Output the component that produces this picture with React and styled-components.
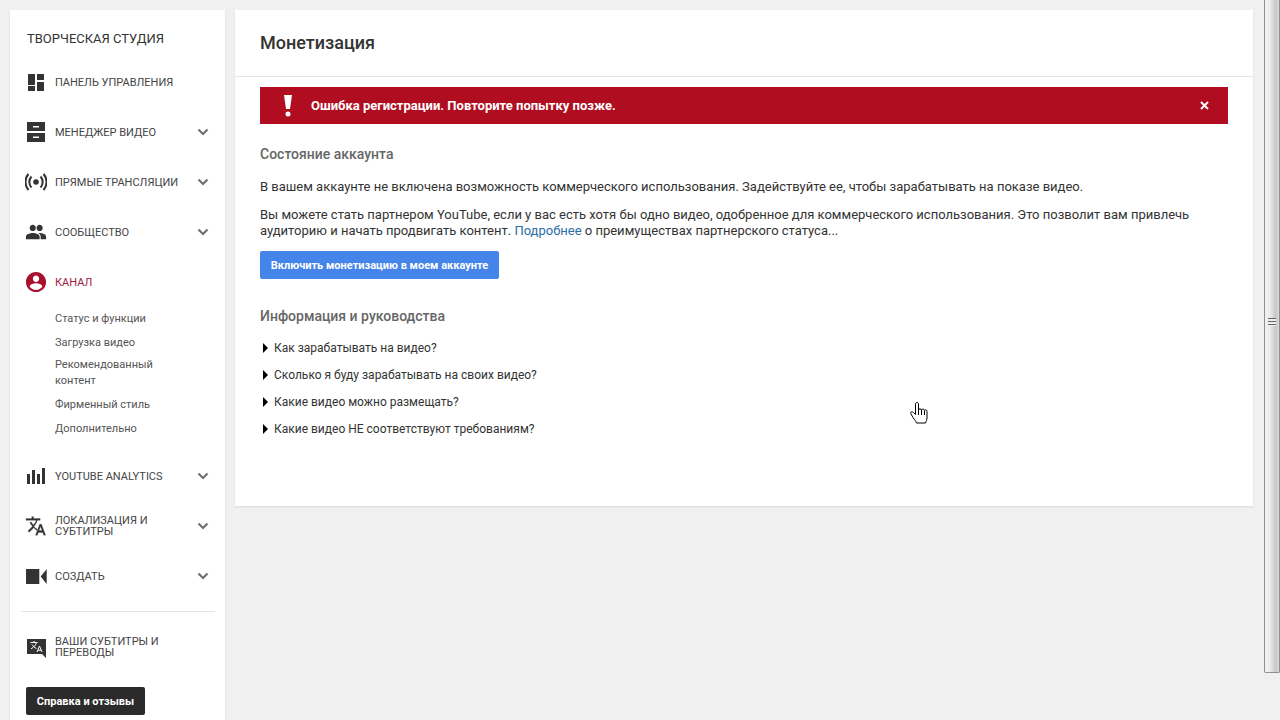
import React from 'react'
import styled, { createGlobalStyle } from 'styled-components'

const GlobalStyle = createGlobalStyle`
  html, body {
    margin: 0;
    padding: 0;
    height: 100%;
    overflow: hidden;
    background: #f0f0f0;
    font-family: Roboto, "Liberation Sans", sans-serif;
  }
`

const Page = styled.div`
  position: relative;
  display: flex;
  width: 1280px;
  height: 720px;
  overflow: hidden;
`
const Workspace = styled.div`
  flex: 1;
  display: flex;
  gap: 10px;
  align-items: flex-start;
  padding: 10px 11px 0 10px;
`
const Sidebar = styled.aside`
  width: 215px;
  height: 710px;
  flex-shrink: 0;
  background: #fff;
  box-shadow: 0 1px 2px rgba(0, 0, 0, 0.1);
  box-sizing: border-box;
  padding-top: 22px;
`
const Brand = styled.div`
  font-size: 13px;
  line-height: 14px;
  font-weight: 400;
  color: #333;
  padding-left: 17px;
  margin-bottom: 11px;
`
const NavRow = styled.div`
  height: 50px;
  display: flex;
  align-items: center;
  padding-left: 15px;
  padding-right: 15px;
  box-sizing: border-box;
`
const NavIcon = styled.svg`
  width: 22px;
  height: 22px;
  flex-shrink: 0;
  margin-right: 8px;
  fill: ${props => props.$color || '#333'};
`
const NavLabel = styled.span`
  flex: 1;
  font-size: 11px;
  line-height: 11px;
  color: ${props => props.$active ? '#9c1b3c' : '#444'};
  max-width: ${props => props.$wide ? '118px' : 'none'};
`
const Chevron = styled.svg`
  width: 14px;
  height: 14px;
  fill: none;
  stroke: #707070;
  stroke-width: 2.2;
  margin-left: auto;
`
const SubList = styled.div`
  display: flex;
  flex-direction: column;
  padding: 0 0 10px 45px;
`
const SubItem = styled.div`
  font-size: 11px;
  line-height: 16px;
  color: #555;
  width: 118px;
  padding: 4px 0;
  margin-top: ${props => props.$tight ? '-2px' : '0'};
`
const Divider = styled.div`
  height: 1px;
  background: #e4e4e4;
  margin: 10px 10px 10px 11px;
`
const HelpButton = styled.button`
  display: block;
  width: 119px;
  height: 28px;
  margin: 15px 0 0 16px;
  padding: 0;
  border: 0;
  border-radius: 2px;
  background: #2b2b2b;
  color: #fff;
  font-family: inherit;
  font-size: 11px;
  font-weight: 700;
`
const Main = styled.main`
  width: 1018px;
  height: 496px;
  background: #fff;
  box-shadow: 0 1px 2px rgba(0, 0, 0, 0.1);
`
const Header = styled.header`
  height: 67px;
  box-sizing: border-box;
  border-bottom: 1px solid #e4e4e4;
  padding-top: 22px;
  padding-left: 25px;
`
const Title = styled.h1`
  margin: 0;
  font-size: 18px;
  line-height: 21px;
  font-weight: 500;
  color: #333;
`
const Content = styled.div`
  padding: 10px 25px 0;
`
const Alert = styled.div`
  height: 37px;
  display: flex;
  align-items: center;
  background: #b00d20;
  color: #fff;
`
const AlertMark = styled.svg`
  width: 10px;
  height: 22px;
  margin-left: 23px;
  margin-right: 18px;
  fill: #fff;
`
const AlertText = styled.span`
  flex: 1;
  font-size: 13px;
  font-weight: 700;
`
const CloseIcon = styled.svg`
  width: 9px;
  height: 9px;
  margin-right: 19px;
  stroke: #fff;
  stroke-width: 2;
`
const SectionTitle = styled.h2`
  margin: ${props => props.$top} 0 0;
  font-size: 14px;
  line-height: 18px;
  font-weight: 500;
  color: #666;
`
const Paragraph = styled.p`
  margin: ${props => props.$top} 0 0;
  font-size: 13px;
  line-height: 16px;
  color: #333;
`
const InlineLink = styled.a`
  color: #2a6da8;
`
const PrimaryButton = styled.button`
  display: block;
  width: 239px;
  height: 28px;
  margin-top: 12px;
  padding: 0;
  border: 0;
  border-radius: 2px;
  background: #4584e8;
  color: #fff;
  font-family: inherit;
  font-size: 11px;
  font-weight: 700;
`
const Faq = styled.div`
  margin-top: 9px;
`
const FaqRow = styled.div`
  height: 27px;
  display: flex;
  align-items: center;
  font-size: 12px;
  color: #333;
`
const FaqArrow = styled.span`
  width: 0;
  height: 0;
  margin: 0 6px 0 3px;
  border-top: 5px solid transparent;
  border-bottom: 5px solid transparent;
  border-left: 5px solid #000;
`
const Scrollbar = styled.div`
  width: 16px;
  height: 720px;
  flex-shrink: 0;
  box-sizing: border-box;
  background: #f0f0f0;
`
const Thumb = styled.div`
  height: 673px;
  box-sizing: border-box;
  border: 1px solid #8f8f8f;
  border-top: 0;
  border-radius: 0 0 2px 2px;
  background: linear-gradient(to right, #f2f2f2 0%, #ececec 35%, #c8c8c8 75%, #d8d8d8 100%);
  display: flex;
  align-items: center;
  justify-content: center;
  padding-bottom: 29px;
`
const Grip = styled.div`
  width: 8px;
  height: 8px;
  background: repeating-linear-gradient(to bottom, #666 0, #666 1px, #eee 1px, #eee 3px);
`
const Cursor = styled.svg`
  position: absolute;
  left: 910px;
  top: 401px;
  width: 18px;
  height: 24px;
`

const nav = [
  { label: 'ПАНЕЛЬ УПРАВЛЕНИЯ', box: '0 0 22 22', d: 'M3 3h7v11H3zM12 3h7v6h-7zM3 15h7v5H3zM12 11h7v9h-7z' },
  { label: 'МЕНЕДЖЕР ВИДЕО', more: true, box: '0 0 22 22', d: 'M2 1h18v9H2zM2 12h18v9H2zM8 5v1.500h6V5zM8 15.500V17h6v-1.500z', rule: 'evenodd' },
  { label: 'ПРЯМЫЕ ТРАНСЛЯЦИИ', more: true, live: true },
  { label: 'СООБЩЕСТВО', more: true, box: '-1 -1 24 24', d: 'M15 10c1.900 0 3.300-1.500 3.300-3.400S16.900 3.200 15 3.200s-3.400 1.500-3.400 3.400S13.100 10 15 10zM7.500 10c1.900 0 3.300-1.500 3.300-3.400S9.400 3.200 7.500 3.200 4.100 4.700 4.100 6.600 5.600 10 7.500 10zm0 2.200C5 12.200 0 13.500 0 16v2.800h15V16c0-2.500-5-3.800-7.500-3.800zm7.500 0c-.3 0-.7 0-1.100.1 1.300.9 2.200 2.100 2.200 3.700v2.800H22V16c0-2.500-4.500-3.800-7-3.800z' },
]
const subItems = [
  { label: 'Статус и функции' },
  { label: 'Загрузка видео' },
  { label: 'Рекомендованный контент', tight: true },
  { label: 'Фирменный стиль' },
  { label: 'Дополнительно' },
]
const faq = ['Как зарабатывать на видео?', 'Сколько я буду зарабатывать на своих видео?', 'Какие видео можно размещать?', 'Какие видео НЕ соответствуют требованиям?']
const translate = 'M12.300 14.500l-2.800-2.800.03-.03C11.500 9.500 12.900 7 13.700 4.400H17V2.200H9.100V0H6.900v2.200H0v2.200h12.300c-.7 2.100-1.900 4.100-3.300 5.700-1-1.100-1.700-2.200-2.300-3.500H4.500c.8 1.800 1.900 3.500 3.300 5l-5.600 5.600 1.600 1.600 5.500-5.500 3.400 3.400.6-2.200zM18.600 9h-2.200l-5 13.200h2.200l1.200-3.300h5.200l1.300 3.300h2.200L18.600 9zm-3 7.700l1.800-4.800 1.800 4.800h-3.600z'

const More = () => (
  <Chevron viewBox="0 0 14 14"><path d="M2.500 4.500l4.500 4.500 4.500-4.500" /></Chevron>
)

const App = () => {
  return (
    <Page>
      <GlobalStyle />
      <Workspace>
        <Sidebar>
          <Brand>ТВОРЧЕСКАЯ СТУДИЯ</Brand>
          {nav.map((item) => (
            <NavRow key={item.label}>
              {item.live ? (
                <NavIcon viewBox="0 0 22 22">
                  <circle cx="11" cy="11" r="2.800" />
                  <path d="M6.500 5.500a8 8 0 0 0 0 11M15.500 5.500a8 8 0 0 1 0 11M3.500 3a12 12 0 0 0 0 16M18.500 3a12 12 0 0 1 0 16" fill="none" stroke="#333" strokeWidth="2" />
                </NavIcon>
              ) : (
                <NavIcon viewBox={item.box}><path d={item.d} fillRule={item.rule} /></NavIcon>
              )}
              <NavLabel>{item.label}</NavLabel>
              {item.more && <More />}
            </NavRow>
          ))}
          <NavRow>
            <NavIcon viewBox="0 0 24 24" $color="#a8102e">
              <path d="M12 1C5.900 1 1 5.900 1 12s4.900 11 11 11 11-4.900 11-11S18.100 1 12 1zm0 4c2 0 3.400 1.600 3.400 3.500S14 12 12 12s-3.400-1.600-3.400-3.500S10 5 12 5zm0 15.600c-2.900 0-5.400-1.500-6.900-3.700.1-2.200 4.600-3.500 6.900-3.500s6.800 1.300 6.900 3.500c-1.500 2.200-4 3.700-6.900 3.700z" />
            </NavIcon>
            <NavLabel $active>КАНАЛ</NavLabel>
          </NavRow>
          <SubList>
            {subItems.map((item) => <SubItem key={item.label} $tight={item.tight}>{item.label}</SubItem>)}
          </SubList>
          <NavRow>
            <NavIcon viewBox="0 0 22 22"><path d="M2 9h3v10H2zM7 5h3v14H7zM12 9h3v10h-3zM17 3h3v16h-3z" /></NavIcon>
            <NavLabel>YOUTUBE ANALYTICS</NavLabel>
            <More />
          </NavRow>
          <NavRow>
            <NavIcon viewBox="-1.200 -2 26.400 26.400"><path d={translate} stroke="#333" strokeWidth="0.300" /></NavIcon>
            <NavLabel $wide>ЛОКАЛИЗАЦИЯ И СУБТИТРЫ</NavLabel>
            <More />
          </NavRow>
          <NavRow>
            <NavIcon viewBox="0 0 22 22">
              <path d="M1 4h13.300v15H1zM15.700 11.500L21.700 4v15z" />
            </NavIcon>
            <NavLabel>СОЗДАТЬ</NavLabel>
            <More />
          </NavRow>
          <Divider />
          <NavRow>
            <NavIcon viewBox="0 0 22 22">
              <path d="M2 3h19v19l-4-4H2z" />
              <path d="M5.500 6.500h7M9 5v1.500M11.500 6.500c-.7 2.300-2.500 4.500-5.500 6.500M7 8.500c1 1.700 2.300 3 4.500 4M12 16l2.500-6 2.500 6M13 14.200h3" fill="none" stroke="#fff" strokeWidth="1" />
            </NavIcon>
            <NavLabel $wide>ВАШИ СУБТИТРЫ И ПЕРЕВОДЫ</NavLabel>
          </NavRow>
          <HelpButton>Справка и отзывы</HelpButton>
        </Sidebar>
        <Main>
          <Header>
            <Title>Монетизация</Title>
          </Header>
          <Content>
            <Alert>
              <AlertMark viewBox="0 0 10 22">
                <path d="M1 0h8L7 14H3z" />
                <circle cx="5" cy="19" r="2.500" />
              </AlertMark>
              <AlertText>Ошибка регистрации. Повторите попытку позже.</AlertText>
              <CloseIcon viewBox="0 0 9 9"><path d="M1 1l7 7M8 1l-7 7" /></CloseIcon>
            </Alert>
            <SectionTitle $top="21px">Состояние аккаунта</SectionTitle>
            <Paragraph $top="16px">В вашем аккаунте не включена возможность коммерческого использования. Задействуйте ее, чтобы зарабатывать на показе видео.</Paragraph>
            <Paragraph $top="12px">
              Вы можете стать партнером YouTube, если у вас есть хотя бы одно видео, одобренное для коммерческого использования. Это позволит вам привлечь аудиторию и начать продвигать контент. <InlineLink>Подробнее</InlineLink> о преимуществах партнерского статуса...
            </Paragraph>
            <PrimaryButton>Включить монетизацию в моем аккаунте</PrimaryButton>
            <SectionTitle $top="28px">Информация и руководства</SectionTitle>
            <Faq>
              {faq.map((item) => (
                <FaqRow key={item}><FaqArrow />{item}</FaqRow>
              ))}
            </Faq>
          </Content>
        </Main>
      </Workspace>
      <Scrollbar>
        <Thumb><Grip /></Thumb>
      </Scrollbar>
      <Cursor viewBox="0 0 18 24">
        <path d="M5.500 3c0-2 3-2 3 0v6c0-1.500 3-1.500 3 0 0-1.300 3-1.300 3 .5 0-1 2.500-1 2.500.7V17c0 2-1 3-1.500 5H6.500c-.5-2-2-3-3.500-5.500L1 13c-1-2 1-3 2.500-1.500l2 2z" fill="#fff" stroke="#000" strokeWidth="1" />
        <path d="M8.500 9v5M11.500 9v5M14.500 10v4" fill="none" stroke="#000" strokeWidth="1" />
      </Cursor>
    </Page>
  )
}

export default App
